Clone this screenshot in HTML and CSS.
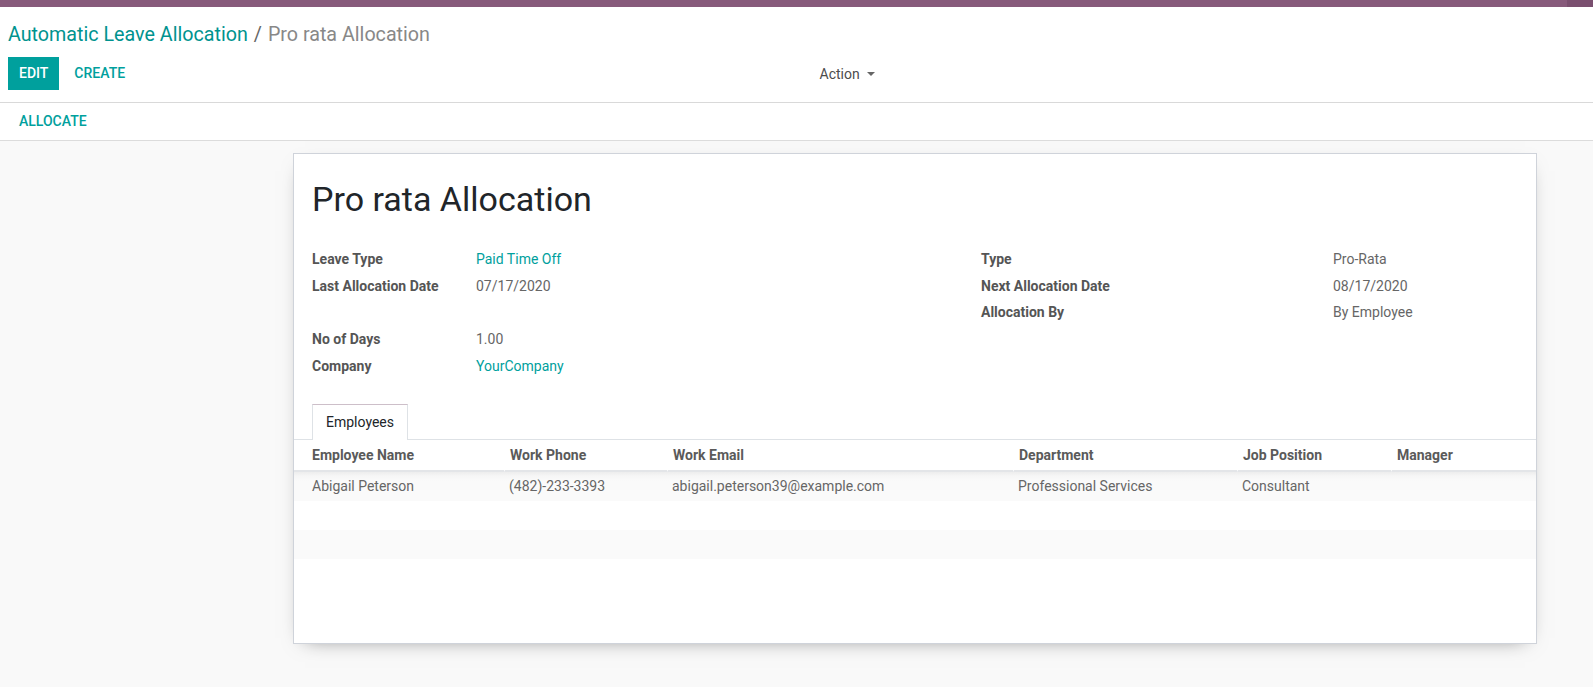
FILE: index.html
```html
<!DOCTYPE html>
<html lang="en">
<head>
<meta charset="utf-8">
<title>Pro rata Allocation</title>
<link rel="stylesheet" href="styles.css">
</head>
<body>
<div class="topbar"><span class="topbar-end"></span></div>
<div class="control-panel">
  <ol class="breadcrumb">
    <li><a class="crumb-link" href="#">Automatic Leave Allocation</a></li>
    <li class="crumb-sep">/</li>
    <li class="crumb-active">Pro rata Allocation</li>
  </ol>
  <div class="cp-row">
    <div class="cp-left">
      <button class="btn btn-primary">Edit</button>
      <button class="btn btn-link">Create</button>
    </div>
    <div class="cp-right">
      <button class="btn-action">Action <span class="caret"></span></button>
    </div>
  </div>
</div>
<div class="statusbar">
  <button class="btn btn-link">Allocate</button>
</div>
<div class="content">
  <div class="sheet">
    <h1 class="title">Pro rata Allocation</h1>
    <div class="groups">
      <div class="group group-left">
        <div class="label">Leave Type</div><div class="value"><a class="link" href="#">Paid Time Off</a></div>
        <div class="label">Last Allocation Date</div><div class="value">07/17/2020</div>
        <div class="label"></div><div class="value"></div>
        <div class="label">No of Days</div><div class="value">1.00</div>
        <div class="label">Company</div><div class="value"><a class="link" href="#">YourCompany</a></div>
      </div>
      <div class="group group-right">
        <div class="label">Type</div><div class="value">Pro-Rata</div>
        <div class="label">Next Allocation Date</div><div class="value">08/17/2020</div>
        <div class="label">Allocation By</div><div class="value">By Employee</div>
      </div>
    </div>
    <div class="notebook">
      <div class="tabs"><div class="tab">Employees</div></div>
      <table class="list">
        <colgroup>
          <col class="c1"><col class="c2"><col class="c3"><col class="c4"><col class="c5"><col class="c6">
        </colgroup>
        <thead>
          <tr><th>Employee Name</th><th>Work Phone</th><th>Work Email</th><th>Department</th><th>Job Position</th><th>Manager</th></tr>
        </thead>
        <tbody>
          <tr class="odd first"><td>Abigail Peterson</td><td>(482)-233-3393</td><td>abigail.peterson39@example.com</td><td>Professional Services</td><td>Consultant</td><td></td></tr>
          <tr class="even"><td></td><td></td><td></td><td></td><td></td><td></td></tr>
          <tr class="odd"><td></td><td></td><td></td><td></td><td></td><td></td></tr>
          <tr class="even"><td></td><td></td><td></td><td></td><td></td><td></td></tr>
        </tbody>
      </table>
    </div>
  </div>
</div>
</body>
</html>
```

FILE: styles.css
```css
* { box-sizing: border-box; }
html, body { height: 100%; }
body {
  margin: 0;
  font-family: Roboto, "Noto Sans", "Liberation Sans", sans-serif;
  font-size: 14px;
  color: #4c4c4c;
  background: #fff;
  display: flex;
  flex-direction: column;
  overflow: hidden;
}
a { text-decoration: none; }
button { font-family: inherit; border: 0; background: none; cursor: pointer; }

.topbar {
  height: 7px;
  background: #875a7b;
  display: flex;
  justify-content: flex-end;
  flex: none;
}
.topbar-end { width: 26px; background: #7a4f6f; }

.control-panel {
  padding: 0 8px 12px 8px;
  border-bottom: 1px solid #d9d9d9;
  flex: none;
}
.breadcrumb {
  list-style: none;
  margin: 13px 0 0 0;
  padding: 0;
  display: flex;
  font-size: 19.7px;
  line-height: 29px;
}
.crumb-link { color: #00938f; }
.crumb-sep { color: #666; padding: 0 6px 0 6px; }
.crumb-active { color: #888; }

.cp-row { display: flex; margin-top: 8px; }
.cp-left { width: 50%; display: flex; gap: 4px; }
.cp-right { width: 50%; display: flex; padding-left: 11px; }

.btn {
  height: 33px;
  padding: 0 11px;
  font-size: 14px;
  font-weight: 500;
  text-transform: uppercase;
  line-height: 33px;
}
.btn-primary { background: #00a09d; color: #fff; }
.btn-link { color: #00a09d; }
.btn-action {
  height: 33px;
  padding: 0 12px;
  font-size: 14px;
  color: #4c4c4c;
  display: flex;
  align-items: center;
}
.caret {
  display: inline-block;
  width: 0; height: 0;
  margin-left: 7px;
  border-left: 4px solid transparent;
  border-right: 4px solid transparent;
  border-top: 4px solid #666;
}

.statusbar {
  padding: 2px 8px 2px 8px;
  border-bottom: 1px solid #dcdcdc;
  flex: none;
  display: flex;
}

.content {
  flex: 1;
  background: #f9f9f9;
  padding: 12px 56px 30px 293px;
}
.sheet {
  background: #fff;
  border: 1px solid #cfd3da;
  box-shadow: 0 6px 20px -12px rgba(0,0,0,0.55);
  padding: 24px 0 55px 0;
}
.title {
  margin: 0;
  padding-left: 18px;
  font-size: 34px;
  line-height: 42px;
  font-weight: 400;
  color: #212529;
}
.groups {
  display: flex;
  margin-top: 26px;
  padding-left: 18px;
}
.group { display: grid; grid-auto-rows: 26.6px; align-items: center; }
.group-left { width: 669px; grid-template-columns: 164px 1fr; }
.group-right { flex: 1; grid-template-columns: 352px 1fr; }
.label { font-weight: 700; color: #555; white-space: nowrap; }
.value { color: #666; }
.link { color: #00a09d; }

.notebook { margin-top: 25px; }
.tabs {
  display: flex;
  padding-left: 18px;
  border-bottom: 1px solid #dee2e6;
}
.tab {
  height: 36px;
  line-height: 35px;
  padding: 0 13px;
  margin-bottom: -1px;
  background: #fff;
  border: 1px solid #dee2e6;
  border-top-color: #cdbfc9;
  border-bottom: 0;
  color: #212529;
}

.list {
  width: 100%;
  border-collapse: separate;
  border-spacing: 0;
  table-layout: fixed;
}
.c1 { width: 210px; }
.c2 { width: 163px; }
.c3 { width: 346px; }
.c4 { width: 224px; }
.c5 { width: 154px; }
.list th, .list td {
  padding: 0 0 0 5px;
  text-align: left;
  white-space: nowrap;
  overflow: hidden;
}
.list th:first-child, .list td:first-child { padding-left: 18px; }
.list th {
  height: 32px;
  font-weight: 700;
  color: #5a5a5a;
  border-bottom: 2px solid #e3e5e8;
  border-left: 1px solid #fff;
}
.list th:first-child { border-left: 0; }
.list td { height: 29px; color: #666; }
.list tr.odd td { background: #fafafa; }
.list tr.first td {
  background: linear-gradient(to bottom, #ededed 0, #f6f6f6 4px, #fafafa 9px);
}
.list tr.even td { background: #fff; }
```
